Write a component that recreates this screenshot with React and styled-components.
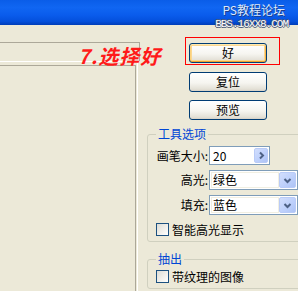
import React from 'react';
import styled, { createGlobalStyle, css } from 'styled-components';

const GlobalStyle = createGlobalStyle`
  html,
  body {
    margin: 0;
    padding: 0;
    background: #ece9d8;
    overflow: hidden;
  }

  body {
    font-family: 'Noto Sans CJK SC', 'Noto Sans', sans-serif;
    font-size: 12px;
    color: #000;
  }
`;

const Window = styled.div`
  position: relative;
  width: 298px;
  height: 291px;
  overflow: hidden;
  display: flex;
  flex-direction: column;
  background: #ece9d8;
`;

// xp blue caption
const TitleBar = styled.div`
  flex-shrink: 0;
  height: 25px;
  background: linear-gradient(
    180deg,
    #0a5de8 0%,
    #1066f2 30%,
    #0a5cec 60%,
    #0450dc 85%,
    #003db8 100%
  );
`;

const Watermark = styled.div`
  position: absolute;
  top: 2px;
  right: 10px;
  display: flex;
  flex-direction: column;
  align-items: flex-end;
  pointer-events: none;
`;

const WatermarkTitle = styled.div`
  margin-right: 3px;
  font-size: 12px;
  line-height: 15px;
  color: #dce8fb;
  text-shadow: 1px 1px 0 #1d3f8a;
`;

const WatermarkUrl = styled.div`
  margin-top: 2px;
  font-family: 'Liberation Mono', 'DejaVu Sans Mono', monospace;
  font-size: 11px;
  line-height: 11px;
  letter-spacing: -1px;
  color: #ffffff;
  text-shadow:
    1px 0 0 #4a5a78,
    -1px 0 0 #4a5a78,
    0 1px 0 #4a5a78,
    0 -1px 0 #4a5a78;
`;

const Body = styled.div`
  flex: 1;
  display: grid;
  grid-template-columns: 140px 158px;
`;

const LeftPane = styled.div`
  padding-top: 17px;
  display: flex;
  flex-direction: column;
`;

const Strip = styled.div`
  box-sizing: border-box;
  width: 140px;
  height: 19px;
  border-top: 1px solid #aca899;
  border-right: 1px solid #aca899;
`;

const Preview = styled.div`
  flex: 1;
  box-sizing: border-box;
  width: 138px;
  border-top: 1px solid #ffffff;
  border-right: 1px solid #ffffff;
  padding-top: 3px;
  display: flex;
  flex-direction: column;
`;

const PreviewInner = styled.div`
  flex: 1;
  margin-right: 1px;
  border-top: 1px solid #aca899;
  border-right: 1px solid #aca899;
`;

const Annotation = styled.div`
  position: absolute;
  left: 78px;
  top: 45px;
  font-family: 'Noto Sans CJK SC', sans-serif;
  font-size: 20px;
  line-height: 22px;
  font-weight: 700;
  font-style: italic;
  color: #ff1a1a;
  letter-spacing: 1px;
  pointer-events: none;
`;

const RightPane = styled.div`
  padding-top: 12px;
  display: flex;
  flex-direction: column;
  align-items: flex-start;
`;

const ButtonColumn = styled.div`
  padding-left: 49px;
  display: flex;
  flex-direction: column;
  align-items: flex-start;
  gap: 8px;
`;

const Highlight = styled.div`
  box-sizing: border-box;
  width: 95px;
  margin-left: -4px;
  margin-bottom: -1px;
  padding: 5px 12px 1px 3px;
  border: 1px solid #ff0000;
`;

const Button = styled.div`
  box-sizing: border-box;
  width: 78px;
  height: 20px;
  border: 1px solid #003c74;
  border-radius: 3px;
  background: linear-gradient(180deg, #ffffff 0%, #f6f5f0 55%, #e3e0d6 90%, #d6d0c5 100%);
  display: flex;
  align-items: center;
  justify-content: center;
  font-size: 12px;
  line-height: 12px;

  ${({ $default }) =>
    $default &&
    css`
      box-shadow:
        inset 0 1px 0 #ffe9b0,
        inset 0 -1px 0 #f0a22c,
        inset 1px 0 0 #fbd27c,
        inset -1px 0 0 #f5b347,
        inset 0 0 0 2px #fbd790;
    `}
`;

const Group = styled.fieldset`
  box-sizing: border-box;
  width: 160px;
  margin: ${({ $top }) => $top}px 0 0 7px;
  padding: ${({ $padTop }) => $padTop}px 0 5px 8px;
  border: 1px solid #d0d0bf;
  border-radius: 3px;
  min-width: 0;
`;

const Legend = styled.legend`
  padding: 0 2px;
  font-size: 12px;
  line-height: 14px;
  color: #0046d5;
`;

const Fields = styled.div`
  display: grid;
  grid-template-columns: 52px auto;
  column-gap: 1px;
  row-gap: 5px;
  align-items: center;
`;

const Label = styled.div`
  text-align: right;
  white-space: nowrap;
  font-size: 12px;
  line-height: 14px;
`;

const Field = styled.div`
  box-sizing: border-box;
  width: ${({ $width }) => $width}px;
  height: ${({ $height }) => $height}px;
  border: 1px solid #7f9db9;
  background: #ffffff;
  display: flex;
  align-items: stretch;
  padding: 1px;
`;

const FieldText = styled.div`
  flex: 1;
  display: flex;
  align-items: center;
  padding-left: 2px;
  font-size: 12px;
  line-height: 12px;
  ${({ $framed }) =>
    $framed &&
    css`
      border: 1px solid #f1efe2;
      padding-left: 1px;
    `}
`;

const MiniButton = styled.div`
  box-sizing: border-box;
  width: ${({ $width }) => $width}px;
  border: 1px solid #b9cbf7;
  border-radius: 2px;
  background: linear-gradient(135deg, #d2defd 0%, #bccffb 60%, #adc3f5 100%);
  display: flex;
  align-items: center;
  justify-content: center;
`;

const CheckRow = styled.div`
  display: flex;
  align-items: center;
  gap: 3px;
  margin-top: ${({ $top }) => $top || 0}px;
  height: 13px;
  font-size: 12px;
  line-height: 13px;
`;

const Box = styled.div`
  box-sizing: border-box;
  width: 13px;
  height: 13px;
  border: 1px solid #1c5180;
  background: linear-gradient(135deg, #dcdcd6 0%, #efeee9 50%, #ffffff 100%);
`;

const Chevron = ({ dir }) => (
  <svg width="9" height="9" viewBox="0 0 9 9">
    <path
      d={dir === 'down' ? 'M1.5 3 L4.5 6 L7.5 3' : 'M3 1.5 L6 4.5 L3 7.5'}
      fill="none"
      stroke="#4d6185"
      strokeWidth="2"
    />
  </svg>
);

const Select = ({ value }) => (
  <Field $width={89} $height={20}>
    <FieldText $framed>{value}</FieldText>
    <MiniButton $width={17}>
      <Chevron dir="down" />
    </MiniButton>
  </Field>
);

export default function App() {
  return (
    <>
      <GlobalStyle />
      <Window>
        <TitleBar />
        <Watermark>
          <WatermarkTitle>PS教程论坛</WatermarkTitle>
          <WatermarkUrl>BBS.16XX8.COM</WatermarkUrl>
        </Watermark>
        <Body>
          <LeftPane>
            <Strip />
            <Preview>
              <PreviewInner />
            </Preview>
          </LeftPane>
          <RightPane>
            <ButtonColumn>
              <Highlight>
                <Button $default>好</Button>
              </Highlight>
              <Button>复位</Button>
              <Button>预览</Button>
            </ButtonColumn>

            <Group $top={7} $padTop={5}>
              <Legend>工具选项</Legend>
              <Fields>
                <Label>画笔大小:</Label>
                <Field $width={61} $height={19}>
                  <FieldText>20</FieldText>
                  <MiniButton $width={14}>
                    <Chevron dir="right" />
                  </MiniButton>
                </Field>
                <Label>高光:</Label>
                <Select value="绿色" />
                <Label>填充:</Label>
                <Select value="蓝色" />
              </Fields>
              <CheckRow $top={8}>
                <Box />
                智能高光显示
              </CheckRow>
            </Group>

            <Group $top={10} $padTop={4}>
              <Legend>抽出</Legend>
              <CheckRow>
                <Box />
                带纹理的图像
              </CheckRow>
            </Group>
          </RightPane>
        </Body>
        <Annotation>7.选择好</Annotation>
      </Window>
    </>
  );
}
